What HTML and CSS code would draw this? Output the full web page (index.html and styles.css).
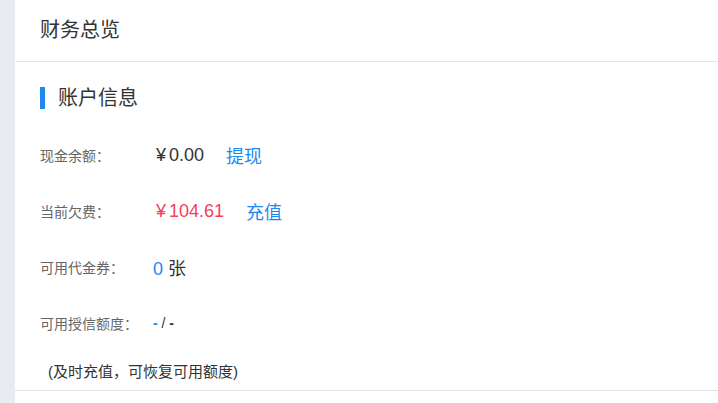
FILE: index.html
```html
<!DOCTYPE html>
<html lang="zh-CN">
<head>
<meta charset="utf-8">
<link rel="stylesheet" href="styles.css">
</head>
<body>
<div class="layout">
  <aside class="side"></aside>
  <main class="main">
    <header class="page-head"><h1 class="page-title">财务总览</h1></header>
    <section class="panel">
      <h2 class="panel-title">账户信息</h2>
      <div class="rows">
        <div class="row"><span class="label">现金余额：</span><span class="val money">¥<span class="num">0.00</span></span><a class="link">提现</a></div>
        <div class="row"><span class="label">当前欠费：</span><span class="val money red">¥<span class="num">104.61</span></span><a class="link">充值</a></div>
        <div class="row"><span class="label">可用代金券：</span><span class="val"><span class="blue">0</span> 张</span></div>
        <div class="row"><span class="label">可用授信额度：</span><span class="val small"><span class="blue dash">-</span> / <b class="dash">-</b></span></div>
      </div>
      <p class="note">(及时充值，可恢复可用额度)</p>
    </section>
  </main>
</div>
</body>
</html>
```
FILE: styles.css
```css
* { box-sizing: border-box; }
html, body { margin: 0; padding: 0; background: #fff; }
body {
  font-family: "Liberation Sans", "Noto Sans CJK SC", sans-serif;
  color: #333;
  width: 718px;
  height: 403px;
  overflow: hidden;
}
.layout { display: flex; height: 403px; }
.side { width: 15px; flex: none; background: #e8ebf0; }
.main { flex: 1; }
.page-head {
  height: 62px;
  border-bottom: 1px solid #e5e5e5;
  display: flex;
  align-items: center;
  padding: 0 0 2px 25px;
}
.page-title { margin: 0; font-size: 20px; font-weight: normal; color: #333; line-height: 24px; }
.panel { padding: 25px 0 0 25px; border-bottom: 1px solid #dde3ea; }
.panel-title {
  margin: 0;
  font-size: 20px;
  font-weight: normal;
  line-height: 22px;
  border-left: 5px solid #1e88f0;
  padding-left: 13px;
}
.rows { margin-top: 18px; }
.row { height: 56px; display: flex; align-items: center; }
.label { width: 113px; flex: none; font-size: 14px; color: #666; }
.val { font-size: 18px; color: #333; }
.money { padding-left: 3px; }
.num { margin-left: 3px; }
.red { color: #f4405c; }
.blue { color: #1e88f0; }
.small { font-size: 14px; }
.dash { font-weight: bold; }
.link { margin-left: 22px; font-size: 18px; color: #1e88f0; cursor: pointer; }
.note { margin: 11px 0 0 8px; font-size: 15px; line-height: 20px; padding-bottom: 8px; color: #333; }
```
